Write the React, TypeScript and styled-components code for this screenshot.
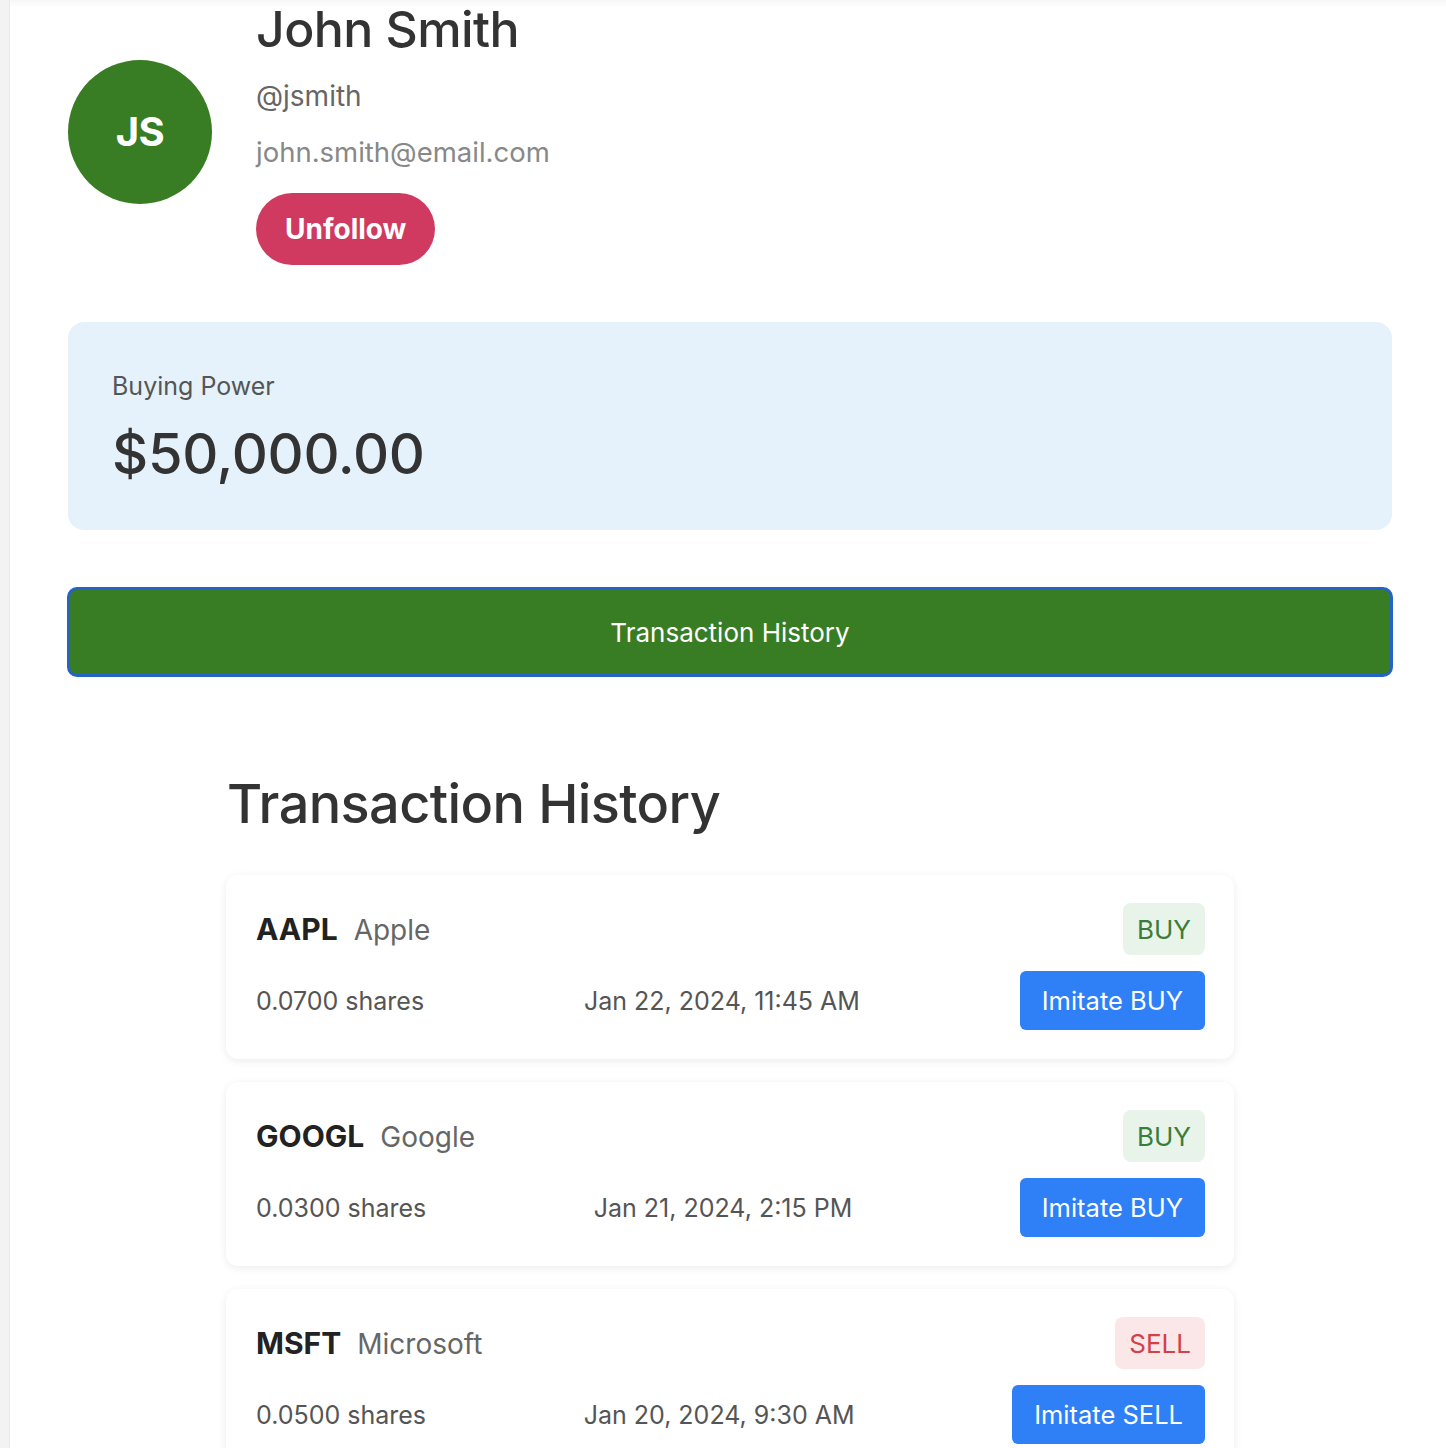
import React from "react";
import styled, { createGlobalStyle } from "styled-components";

const GlobalStyle = createGlobalStyle`
  html, body {
    margin: 0;
    padding: 0;
    background: #f4f4f4;
  }
  body {
    font-family: Inter, "Noto Sans", "Liberation Sans", sans-serif;
    color: #333;
  }
  * { box-sizing: border-box; }
`;

const Shell = styled.div`
  display: flex;
  min-height: 1448px;
`;

const SideStrip = styled.div`
  width: 10px;
  flex: none;
  background: #f3f3f3;
  border-right: 1px solid #e9e9e9;
`;

const Page = styled.main`
  flex: 1;
  background: #fff;
  padding: 0 54px 40px 58px;
  box-shadow: inset 0 10px 10px -10px rgba(0, 0, 0, 0.07);
  overflow: hidden;
`;

const Header = styled.section`
  display: flex;
  align-items: center;
  gap: 44px;
  margin-top: -2px;
`;

const Avatar = styled.div`
  width: 144px;
  height: 144px;
  border-radius: 50%;
  background: #387d23;
  color: #fff;
  display: flex;
  align-items: center;
  justify-content: center;
  font-size: 40px;
  font-weight: 700;
  letter-spacing: -0.5px;
  flex: none;
`;

const Info = styled.div`
  display: flex;
  flex-direction: column;
  align-items: flex-start;
`;

const Name = styled.h1`
  margin: 0 0 19px;
  font-size: 50px;
  line-height: 62px;
  font-weight: 500;
  color: #333;
  letter-spacing: -0.6px;
`;

const Handle = styled.div`
  font-size: 28px;
  line-height: 34px;
  color: #666;
  margin-bottom: 22px;
`;

const Email = styled.div`
  font-size: 27.5px;
  line-height: 34px;
  color: #888;
  margin-bottom: 24px;
`;

const PillButton = styled.button`
  height: 72px;
  padding: 0 29px;
  border: none;
  border-radius: 36px;
  background: #d03a60;
  color: #fff;
  font-family: inherit;
  font-size: 28px;
  font-weight: 700;
  cursor: pointer;
`;

const PowerCard = styled.section`
  margin-top: 57px;
  height: 208px;
  background: #e5f2fc;
  border-radius: 16px;
  padding: 49px 44px 41px;
  display: flex;
  flex-direction: column;
  gap: 18px;
`;

const PowerLabel = styled.div`
  font-size: 25px;
  line-height: 30px;
  color: #555;
`;

const PowerAmount = styled.div`
  font-size: 56px;
  line-height: 70px;
  font-weight: 500;
  color: #333;
  letter-spacing: -0.3px;
`;

const HistoryButton = styled.button`
  margin-top: 57px;
  width: calc(100% + 2px);
  margin-left: -1px;
  height: 90px;
  border: 3px solid #2563c8;
  border-radius: 10px;
  background: #387d23;
  color: #fff;
  font-family: inherit;
  font-size: 26px;
  font-weight: 400;
  display: block;
  cursor: pointer;
`;

const HistorySection = styled.section`
  max-width: 1008px;
  margin: 93px auto 0;
`;

const HistoryTitle = styled.h2`
  margin: 0 0 38px 1px;
  font-size: 54px;
  line-height: 67px;
  font-weight: 500;
  color: #333;
  letter-spacing: -0.6px;
`;

const List = styled.div`
  display: flex;
  flex-direction: column;
  gap: 23px;
`;

const Card = styled.article`
  background: #fff;
  border-radius: 12px;
  box-shadow: 0 2px 8px rgba(0, 0, 0, 0.08);
  padding: 28px 29px 29px 30px;
  display: flex;
  flex-direction: column;
  gap: 16px;
`;

const Row = styled.div`
  display: flex;
  align-items: center;
  justify-content: space-between;
`;

const SymbolGroup = styled.div`
  display: flex;
  align-items: baseline;
  gap: 16px;
`;

const Ticker = styled.span`
  font-size: 30px;
  font-weight: 700;
  color: #222;
`;

const Company = styled.span`
  font-size: 28px;
  color: #666;
`;

const Badge = styled.span<{ $type: "BUY" | "SELL" }>`
  height: 52px;
  padding: 0 14px;
  display: inline-flex;
  align-items: center;
  border-radius: 8px;
  font-size: 26px;
  background: ${(p) => (p.$type === "BUY" ? "#e8f4e9" : "#fbe7e8")};
  color: ${(p) => (p.$type === "BUY" ? "#3a7d3a" : "#d0414b")};
`;

const Meta = styled.span`
  font-size: 25px;
  color: #555;
`;

const ImitateButton = styled.button`
  height: 59px;
  padding: 0 22px;
  border: none;
  border-radius: 6px;
  background: #2f80f6;
  color: #fff;
  font-family: inherit;
  font-size: 25.5px;
  cursor: pointer;
`;

type Tx = {
  ticker: string;
  company: string;
  type: "BUY" | "SELL";
  shares: string;
  date: string;
};

const transactions: Tx[] = [
  { ticker: "AAPL", company: "Apple", type: "BUY", shares: "0.0700", date: "Jan 22, 2024, 11:45 AM" },
  { ticker: "GOOGL", company: "Google", type: "BUY", shares: "0.0300", date: "Jan 21, 2024, 2:15 PM" },
  { ticker: "MSFT", company: "Microsoft", type: "SELL", shares: "0.0500", date: "Jan 20, 2024, 9:30 AM" },
];

export default function App() {
  return (
    <>
      <GlobalStyle />
      <Shell>
        <SideStrip />
        <Page>
          <Header>
            <Avatar>JS</Avatar>
            <Info>
              <Name>John Smith</Name>
              <Handle>@jsmith</Handle>
              <Email>john.smith@email.com</Email>
              <PillButton>Unfollow</PillButton>
            </Info>
          </Header>

          <PowerCard>
            <PowerLabel>Buying Power</PowerLabel>
            <PowerAmount>$50,000.00</PowerAmount>
          </PowerCard>

          <HistoryButton>Transaction History</HistoryButton>

          <HistorySection>
            <HistoryTitle>Transaction History</HistoryTitle>
            <List>
              {transactions.map((t) => (
                <Card key={t.ticker}>
                  <Row>
                    <SymbolGroup>
                      <Ticker>{t.ticker}</Ticker>
                      <Company>{t.company}</Company>
                    </SymbolGroup>
                    <Badge $type={t.type}>{t.type}</Badge>
                  </Row>
                  <Row>
                    <Meta>{t.shares} shares</Meta>
                    <Meta>{t.date}</Meta>
                    <ImitateButton>Imitate {t.type}</ImitateButton>
                  </Row>
                </Card>
              ))}
            </List>
          </HistorySection>
        </Page>
      </Shell>
    </>
  );
}
